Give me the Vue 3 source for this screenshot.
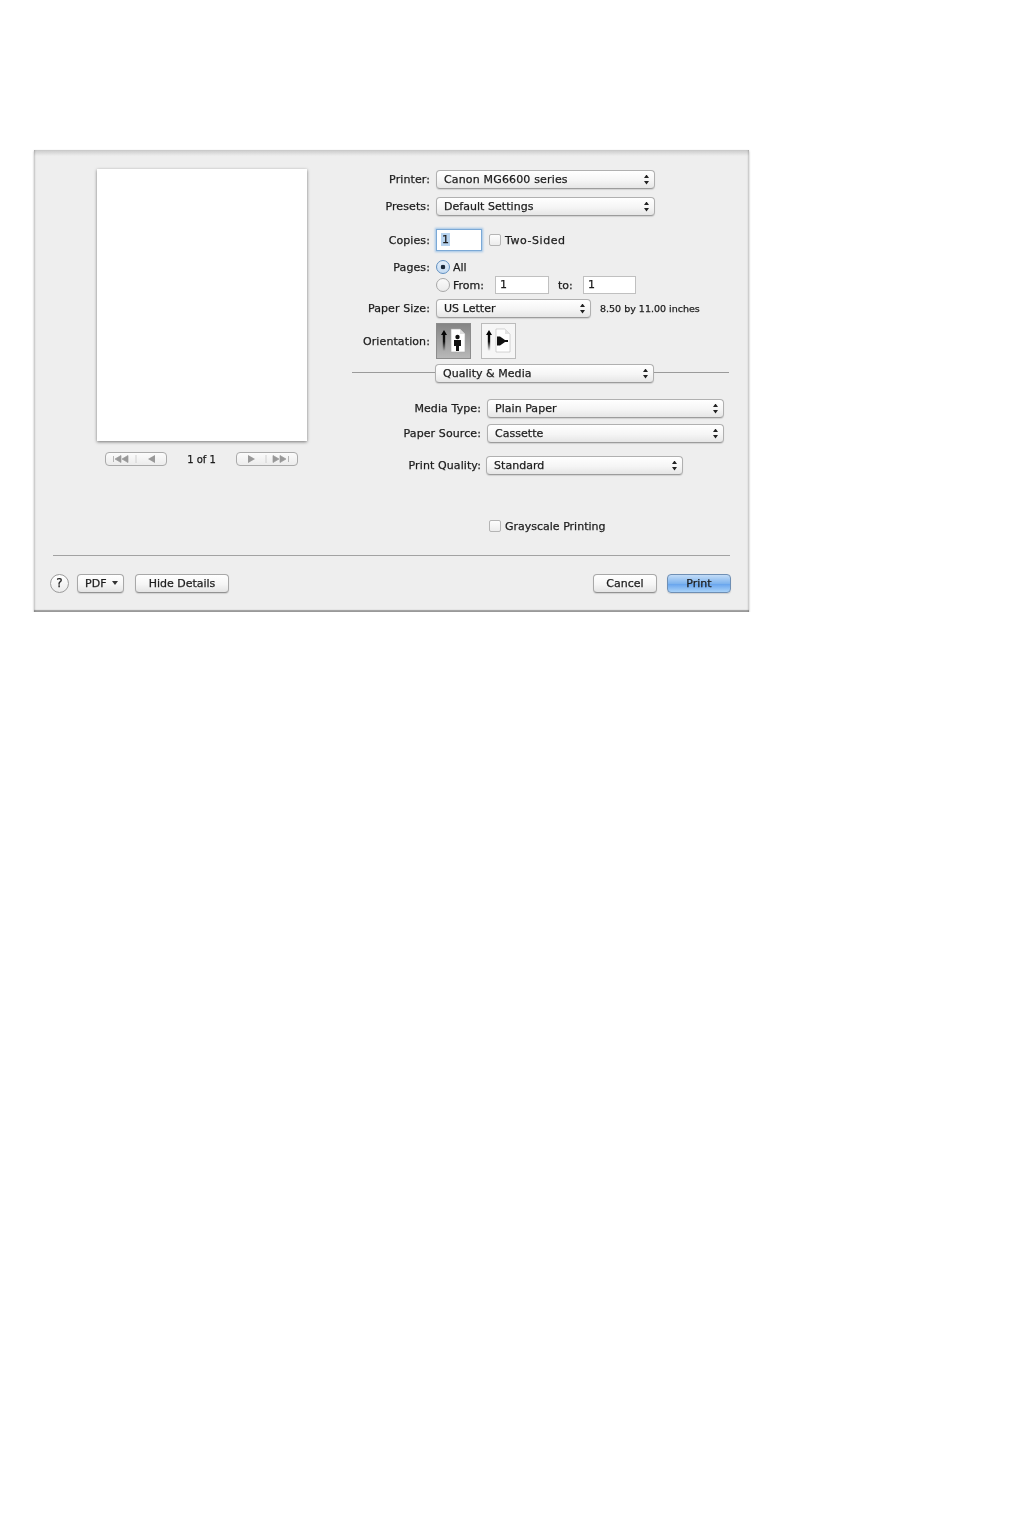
<script setup>
</script>

<template>
  <div class="window">
    <div class="main">
      <div class="preview">
        <div class="page"></div>
        <div class="pager">
          <div class="seg">
            <svg width="60" height="12" viewBox="1 1 60 12">
              <path d="M8.500 4v6M10 7l6-3.500v7zM17 7l6-3.500v7z" fill="#999" stroke="#999" stroke-width=".7"/>
              <path d="M31 3v8" stroke="#d0d0d0"/>
              <path d="M43 7l7-4v8z" fill="#999"/>
            </svg>
          </div>
          <span class="of">1 of 1</span>
          <div class="seg">
            <svg width="60" height="12" viewBox="1 1 60 12">
              <path d="M12 3l7 4-7 4z" fill="#999"/>
              <path d="M30 3v8" stroke="#d0d0d0"/>
              <path d="M37 3.500l6 3.500-6 3.500zM44 3.500l6 3.500-6 3.500zM52.500 4v6" fill="#999" stroke="#999" stroke-width=".7"/>
            </svg>
          </div>
        </div>
      </div>

      <div class="form">
        <div class="row">
          <label class="lab">Printer:</label>
          <div class="select w219"><span class="canon">Canon MG6600 series</span><i class="updown"></i></div>
        </div>
        <div class="row mt8">
          <label class="lab">Presets:</label>
          <div class="select w219"><span>Default Settings</span><i class="updown"></i></div>
        </div>
        <div class="row copies">
          <label class="lab">Copies:</label>
          <div class="copy-input"><span class="sel">1</span></div>
          <span class="check"></span>
          <span class="opt two">Two-Sided</span>
        </div>
        <div class="row pages">
          <label class="lab">Pages:</label>
          <span class="radio on"></span>
          <span class="rtext">All</span>
        </div>
        <div class="row from">
          <span class="lab"></span>
          <span class="radio"></span>
          <span class="rtext wfrom">From:</span>
          <div class="field f1">1</div>
          <span class="to">to:</span>
          <div class="field f2">1</div>
        </div>
        <div class="row mt5">
          <label class="lab">Paper Size:</label>
          <div class="select w155"><span>US Letter</span><i class="updown"></i></div>
          <span class="size">8.50 by 11.00 inches</span>
        </div>
        <div class="row orient">
          <label class="lab">Orientation:</label>
          <div class="orient-btn active">
            <svg width="33" height="34" viewBox="0 0 33 34">
              <defs>
                <linearGradient id="fadeA" x1="0" y1="0" x2="0" y2="1">
                  <stop offset="0" stop-color="#000"/>
                  <stop offset=".55" stop-color="#111"/>
                  <stop offset="1" stop-color="#111" stop-opacity="0"/>
                </linearGradient>
              </defs>
              <path d="M7 6l3 5H8.200v16H5.800V11H4z" fill="url(#fadeA)"/>
              <path d="M14 5h9l5 5v18H14z" fill="#fff" stroke="#aaa" stroke-width=".6"/>
              <path d="M23 5v5h5z" fill="#ddd"/>
              <circle cx="20.500" cy="13" r="2.200" fill="#111"/>
              <path d="M17 16h7v6h-2v5h-3v-5h-2z" fill="#111"/>
            </svg>
          </div>
          <div class="orient-btn second">
            <svg width="33" height="34" viewBox="0 0 33 34">
              <defs>
                <linearGradient id="fadeB" x1="0" y1="0" x2="0" y2="1">
                  <stop offset="0" stop-color="#000"/>
                  <stop offset=".55" stop-color="#111"/>
                  <stop offset="1" stop-color="#111" stop-opacity="0"/>
                </linearGradient>
              </defs>
              <path d="M7 6l3 5H8.200v16H5.800V11H4z" fill="url(#fadeB)"/>
              <path d="M14 5h9l5 5v18H14z" fill="#fff" stroke="#bbb" stroke-width=".6"/>
              <path d="M23 5v5h5z" fill="#e2e2e2"/>
              <path d="M15 12.500h3l5 3.500h3v2h-3l-5 3.500h-3z" fill="#111"/>
            </svg>
          </div>
        </div>
        <div class="section">
          <div class="select w219"><span>Quality &amp; Media</span><i class="updown"></i></div>
        </div>
        <div class="row wide first">
          <label class="lab">Media Type:</label>
          <div class="select w237"><span>Plain Paper</span><i class="updown"></i></div>
        </div>
        <div class="row wide mt6">
          <label class="lab">Paper Source:</label>
          <div class="select w237"><span>Cassette</span><i class="updown"></i></div>
        </div>
        <div class="row wide quality">
          <label class="lab">Print Quality:</label>
          <div class="select w197"><span>Standard</span><i class="updown"></i></div>
        </div>
        <div class="row wide gray">
          <span class="lab"></span>
          <span class="check"></span>
          <span class="opt">Grayscale Printing</span>
        </div>
      </div>
    </div>

    <div class="divider"></div>

    <div class="footer">
      <div class="help">?</div>
      <button class="btn pdf">PDF <i class="caret"></i></button>
      <button class="btn hide">Hide Details</button>
      <div class="spacer"></div>
      <button class="btn cancel">Cancel</button>
      <button class="btn print">Print</button>
    </div>
  </div>
</template>

<style>
html, body { background: #fff; margin: 0; }
</style>

<style scoped>
.window {
  box-sizing: border-box;
  width: 715px;
  height: 462px;
  margin: 150px 0 0 34px;
  background: #eeeeee;
  background-image: linear-gradient(#c9c9c9, #eee 6px);
  box-shadow:
    inset 0 -2px 1px rgba(0,0,0,.35),
    inset 2px 0 2px -1px rgba(0,0,0,.14),
    inset -2px 0 2px -1px rgba(0,0,0,.14),
    0 1px 2px rgba(0,0,0,.3);
  font-family: "DejaVu Sans", sans-serif;
  font-size: 11px;
  color: #1c1c1c;
  -webkit-text-stroke: .25px #1c1c1c;
  display: flex;
  flex-direction: column;
  filter: blur(.6px);
  padding: 0 19px 0 18px;
}
.main { display: flex; height: 405px; }
.preview { width: 300px; padding: 19px 0 0 45px; box-sizing: border-box; }
.page {
  width: 210px;
  height: 272px;
  background: #fff;
  box-shadow: 0 1px 3px rgba(0,0,0,.5);
}
.pager {
  display: flex;
  align-items: center;
  width: 193px;
  margin: 11px 0 0 8px;
  justify-content: space-between;
}
.seg {
  box-sizing: border-box;
  width: 62px;
  height: 14px;
  border: 1px solid #aaa;
  border-radius: 4px;
  background: linear-gradient(#fbfbfb, #ececec);
  display: flex;
}
.seg svg { flex: none; }
.of { font-size: 10px; }

.form { width: 378px; padding-top: 20px; box-sizing: border-box; }
.row { display: flex; align-items: center; height: 19px; }
.lab { width: 78px; flex: none; text-align: right; margin-right: 6px; letter-spacing: .1px; }
.mt8 { margin-top: 8px; }
.mt6 { margin-top: 6px; }
.mt5 { margin-top: 5px; }
.select {
  box-sizing: border-box;
  height: 19px;
  flex: none;
  border: 1px solid #b0b0b0;
  border-bottom-color: #9c9c9c;
  border-radius: 4px;
  background: linear-gradient(#fff, #f5f5f5 55%, #e6e6e6);
  box-shadow: 0 1px 1px rgba(0,0,0,.12);
  display: flex;
  align-items: center;
  justify-content: space-between;
  padding: 0 5px 0 7px;
  letter-spacing: .04px;
}
.canon { letter-spacing: .16px; }
.w219 { width: 219px; }
.w155 { width: 155px; }
.w237 { width: 237px; }
.w197 { width: 197px; }
.updown {
  width: 5px;
  height: 10px;
  background: #222;
  clip-path: polygon(50% 0, 100% 36%, 0 36%, 50% 0, 50% 100%, 0 64%, 100% 64%, 50% 100%);
}
.copies { height: 22px; margin-top: 13px; }
.copy-input {
  box-sizing: border-box;
  width: 46px;
  height: 22px;
  background: #fff;
  border: 1px solid #7ba9d6;
  box-shadow: 0 0 2px 1px #9fc3e6;
  padding: 3px 0 0 4px;
  line-height: 14px;
}
.sel { background: #b7d3ef; padding: 0 1px; }
.check {
  box-sizing: border-box;
  width: 12px;
  height: 12px;
  flex: none;
  border: 1px solid #b4b4b4;
  border-radius: 2px;
  background: linear-gradient(#fdfdfd, #ececec);
  margin-left: 7px;
}
.opt { margin-left: 4px; }
.two { letter-spacing: .55px; }
.pages { height: 18px; margin-top: 7px; }
.from { height: 18px; }
.radio {
  box-sizing: border-box;
  width: 14px;
  height: 14px;
  flex: none;
  border: 1px solid #a8a8a8;
  border-radius: 50%;
  background: linear-gradient(#fafafa, #ebebeb);
}
.radio.on {
  border-color: #5f8fc0;
  background: radial-gradient(circle, #1c2a3a 0 2px, transparent 2.6px), linear-gradient(#e6eff9, #c4dbf2);
}
.rtext { margin-left: 3px; }
.wfrom { width: 33px; flex: none; }
.field {
  box-sizing: border-box;
  height: 18px;
  flex: none;
  background: #fff;
  border: 1px solid #c0c0c0;
  padding-left: 4px;
  line-height: 16px;
}
.f1 { width: 54px; margin-left: 9px; }
.f2 { width: 53px; }
.to { width: 34px; padding-left: 9px; box-sizing: border-box; }
.size { font-size: 9.5px; margin-left: 9px; white-space: nowrap; }
.orient { height: 36px; margin-top: 5px; }
.orient-btn {
  box-sizing: border-box;
  width: 35px;
  height: 36px;
  border: 1px solid #bbb;
  background: #f6f6f6;
  display: flex;
  align-items: center;
  justify-content: center;
}
.orient-btn.active {
  border-color: #8c8c8c;
  background: linear-gradient(#858585, #b8b8b8);
}
.orient-btn.second { margin-left: 10px; }
.section {
  display: flex;
  align-items: center;
  height: 19px;
  margin-top: 5px;
  background: linear-gradient(#9a9a9a, #9a9a9a) 0 8px / 377px 1px no-repeat;
  padding-left: 83px;
}
.wide .lab { width: 129px; }
.first { margin-top: 16px; }
.quality { margin-top: 13px; }
.quality .lab { margin-right: 5px; }
.gray { height: 16px; margin-top: 43px; }
.gray .check { margin-left: 2px; }

.divider { height: 1px; background: #a2a2a2; margin-left: 1px; }
.footer {
  display: flex;
  align-items: center;
  height: 54px;
  margin: 0 -1px 0 -2px;
}
.spacer { flex: 1; }
.help {
  box-sizing: border-box;
  width: 19px;
  height: 19px;
  border-radius: 50%;
  border: 1px solid #9c9c9c;
  background: linear-gradient(#fff, #ececec);
  text-align: center;
  font-size: 12px;
  line-height: 17px;
  margin-right: 8px;
}
.btn {
  box-sizing: border-box;
  height: 19px;
  border: 1px solid #a8a8a8;
  border-bottom-color: #929292;
  border-radius: 4px;
  background: linear-gradient(#fff, #f5f5f5 55%, #e4e4e4);
  box-shadow: 0 1px 1px rgba(0,0,0,.12);
  font: inherit;
  color: inherit;
  padding: 0;
  text-align: center;
  flex: none;
}
.pdf { width: 47px; margin-right: 11px; padding-left: 2px; }
.caret {
  display: inline-block;
  width: 0;
  height: 0;
  border: 3px solid transparent;
  border-top: 4px solid #333;
  border-bottom: 0;
  margin-left: 2px;
  vertical-align: 2px;
}
.hide { width: 94px; }
.cancel { width: 64px; margin-right: 10px; }
.print {
  width: 64px;
  border-color: #6f8fb4;
  background: linear-gradient(#c3dcf7, #7fb4ee 50%, #6aa6ee 55%, #a9d2f8);
}
</style>
